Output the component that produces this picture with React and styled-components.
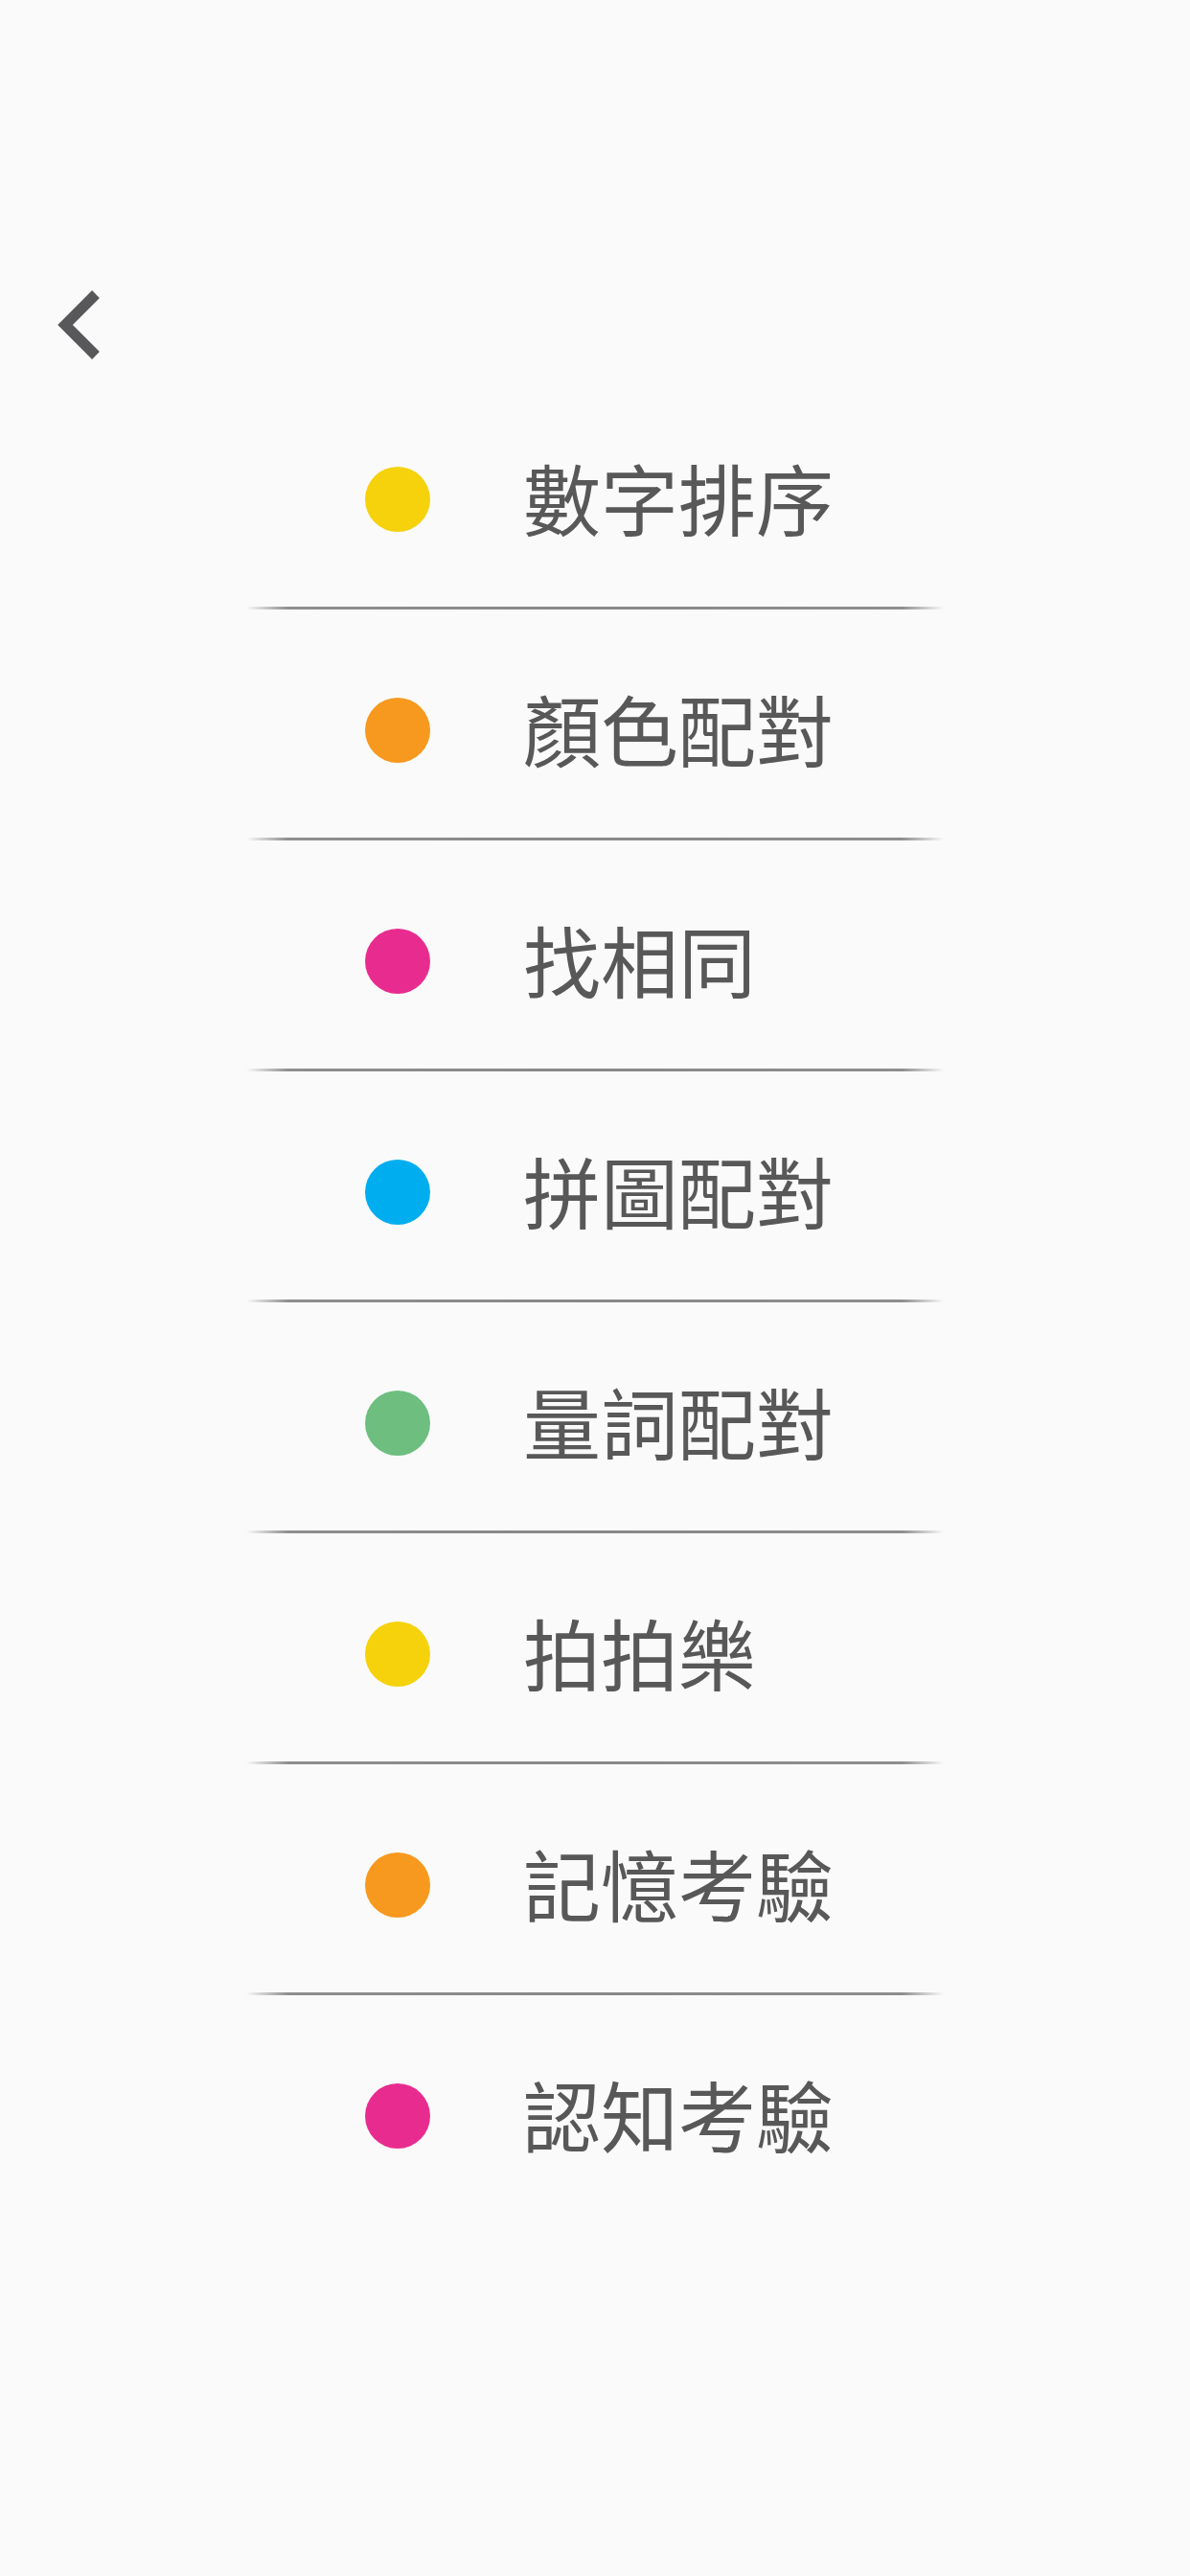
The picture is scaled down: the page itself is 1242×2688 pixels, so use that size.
import React from "react";
import styled, { createGlobalStyle } from "styled-components";

const GlobalStyle = createGlobalStyle`
  html, body {
    margin: 0;
    padding: 0;
    background: #fafafa;
  }
  body {
    font-family: "Noto Sans CJK TC", "Noto Sans", sans-serif;
  }
`;

const Page = styled.div`
  width: 1242px;
  min-height: 2688px;
  background: #fafafa;
  display: flex;
  flex-direction: column;
`;

const Header = styled.header`
  height: 419px;
  box-sizing: border-box;
  padding: 290px 0 0 50px;
  display: flex;
  align-items: flex-start;
`;

const BackButton = styled.button`
  border: none;
  background: transparent;
  padding: 0;
  margin: 0;
  width: 60px;
  height: 100px;
  display: flex;
  cursor: pointer;
`;

const List = styled.ul`
  list-style: none;
  margin: 0;
  padding: 0;
  display: flex;
  flex-direction: column;
`;

const Item = styled.li`
  display: flex;
  flex-direction: column;
`;

const Row = styled.div`
  height: 214px;
  box-sizing: border-box;
  padding-bottom: 10px;
  display: flex;
  align-items: center;
  justify-content: center;
`;

const RowInner = styled.div`
  width: 480px;
  display: flex;
  align-items: center;
  gap: 97px;
`;

const Dot = styled.span`
  flex: 0 0 auto;
  width: 68px;
  height: 68px;
  border-radius: 50%;
  background: ${(p) => p.$color};
`;

const Label = styled.span`
  flex: 0 0 auto;
  white-space: nowrap;
  font-family: "Noto Sans CJK TC", "Noto Sans CJK SC", sans-serif;
  font-size: 81px;
  font-weight: 400;
  color: #585858;
  line-height: 1;
  letter-spacing: 0;
  margin-bottom: 8px;
`;

const Divider = styled.div`
  width: 728px;
  height: 3px;
  margin: 0 auto 24px;
  background: linear-gradient(
    to right,
    rgba(130, 130, 130, 0) 0%,
    rgba(130, 130, 130, 0.9) 6%,
    rgba(130, 130, 130, 0.95) 50%,
    rgba(130, 130, 130, 0.9) 94%,
    rgba(130, 130, 130, 0) 100%
  );
`;

const items = [
  { label: "數字排序", color: "#f5d20c" },
  { label: "顏色配對", color: "#f7991f" },
  { label: "找相同", color: "#e82c8f" },
  { label: "拼圖配對", color: "#00aeef" },
  { label: "量詞配對", color: "#6dbe7f" },
  { label: "拍拍樂", color: "#f5d20c" },
  { label: "記憶考驗", color: "#f7991f" },
  { label: "認知考驗", color: "#e82c8f" },
];

export default function App() {
  return (
    <Page>
      <GlobalStyle />
      <Header>
        <BackButton aria-label="返回">
          <svg width="60" height="100" viewBox="0 0 60 100">
            <polyline
              points="50,17 18,49 50,81"
              fill="none"
              stroke="#58585a"
              strokeWidth="11"
              strokeLinejoin="miter"
              strokeLinecap="butt"
            />
          </svg>
        </BackButton>
      </Header>
      <List>
        {items.map((it, i) => (
          <Item key={it.label + i}>
            <Row>
              <RowInner>
                <Dot $color={it.color} />
                <Label>{it.label}</Label>
              </RowInner>
            </Row>
            {i < items.length - 1 && <Divider />}
          </Item>
        ))}
      </List>
    </Page>
  );
}
